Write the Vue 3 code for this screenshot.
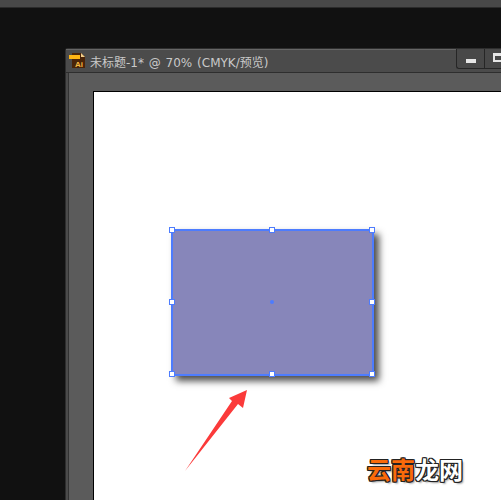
<script setup>
const handles = [
  { x: 0, y: 0 }, { x: 100, y: 0 }, { x: 200, y: 0 },
  { x: 0, y: 72 }, { x: 200, y: 72 },
  { x: 0, y: 144 }, { x: 100, y: 144 }, { x: 200, y: 144 }
]
</script>

<template>
  <div class="page">
    <div class="topbar"></div>
    <div class="window">
      <div class="titlebar">
        <svg class="ai-icon" width="16" height="16" viewBox="0 0 16 16">
          <path d="M3 0h9l4 4v11H3z" fill="#4a2408" />
          <path d="M12 0l4 4h-4z" fill="#f3cf8a" />
          <rect x="0" y="2" width="11" height="4" fill="#fdb515" />
          <text x="6" y="14" class="ai-text">Ai</text>
        </svg>
        <span class="title">未标题-1* @ 70% (CMYK/预览)</span>
        <div class="win-btns">
          <div class="win-btn"><span class="min-glyph"></span></div>
          <div class="win-btn"><span class="max-glyph"></span></div>
        </div>
      </div>
      <div class="workspace">
        <div class="artboard">
          <div class="shape">
            <span
              v-for="(h, i) in handles"
              :key="i"
              class="handle"
              :style="{ left: h.x + 'px', top: h.y + 'px' }"
            ></span>
            <span class="center-dot"></span>
          </div>
        </div>
      </div>
    </div>
    <svg class="arrow" width="70" height="90" viewBox="0 0 70 90">
      <path d="M0 83L47 13L44 10L62 2L58 20L53 16Z" fill="#fb3a3a" />
    </svg>
    <div class="watermark"><span class="orange">云南</span><span class="white">龙网</span></div>
  </div>
</template>

<style>
html, body {
  margin: 0;
  background: #111111;
}
</style>

<style scoped>
.page {
  position: relative;
  width: 501px;
  height: 500px;
  overflow: hidden;
  background: #111111;
  font-family: "DejaVu Sans", "Noto Sans CJK SC", sans-serif;
}

.topbar {
  height: 7px;
  background: #484848;
  border-bottom: 1px solid #2b2b2b;
}

.window {
  box-sizing: border-box;
  width: 480px;
  height: 460px;
  margin: 40px 0 0 65px;
  background: #4b4b4b;
  border: 1px solid #2e2e2e;
  border-right: 0;
  border-bottom: 0;
  border-top-left-radius: 3px;
  display: flex;
  flex-direction: column;
}

.titlebar {
  box-sizing: border-box;
  height: 24px;
  flex: none;
  display: flex;
  align-items: center;
  gap: 5px;
  padding-left: 3px;
  background: #4b4b4b;
  border-top: 1px solid #666666;
  border-bottom: 1px solid #2e2e2e;
  position: relative;
}

.ai-icon {
  flex: none;
}

.ai-text {
  font: bold 8px "Liberation Sans", sans-serif;
  fill: #f5b942;
}

.title {
  font-size: 12px;
  word-spacing: 1px;
  color: #c9c9c9;
  white-space: nowrap;
}

.win-btns {
  position: absolute;
  left: 390px;
  top: -1px;
  display: flex;
}

.win-btn {
  box-sizing: border-box;
  width: 28px;
  height: 20px;
  background: #484848;
  border: 1px solid #262626;
  border-top: 0;
  display: flex;
  align-items: center;
  justify-content: flex-start;
  padding-left: 8px;
}

.win-btn:first-child {
  border-right: 0;
  border-bottom-left-radius: 3px;
}

.min-glyph {
  width: 10px;
  height: 4px;
  background: #e6e6e6;
  margin: 4px 0 0 1px;
}

.max-glyph {
  box-sizing: border-box;
  flex: none;
  width: 14px;
  height: 9px;
  border: 2px solid #e6e6e6;
  border-top-width: 3px;
  margin-top: -3px;
}

.workspace {
  flex: 1;
  margin-left: 2px;
  padding: 18px 0 0 24px;
  background: #5b5b5b;
  border-left: 1px solid #333333;
}

.artboard {
  position: relative;
  height: 100%;
  background: #ffffff;
  border: 1px solid #000000;
  border-right: 0;
  border-bottom: 0;
  box-sizing: border-box;
}

.shape {
  position: absolute;
  left: 77px;
  top: 137px;
  box-sizing: border-box;
  width: 203px;
  height: 147px;
  background: #8786ba;
  border: 2px solid #4d7cfe;
  box-shadow: 5px 5px 7px rgba(0, 0, 0, 0.7);
}

.handle {
  position: absolute;
  box-sizing: border-box;
  width: 6px;
  height: 6px;
  margin: -4px 0 0 -4px;
  background: #ffffff;
  border: 1px solid #4d7cfe;
}

.center-dot {
  position: absolute;
  left: 97px;
  top: 69px;
  width: 4px;
  height: 4px;
  border-radius: 50%;
  background: #4d7cfe;
}

.arrow {
  position: absolute;
  left: 185px;
  top: 388px;
}

.watermark {
  position: absolute;
  left: 367px;
  top: 453px;
  font: bold 24px "Noto Sans CJK SC", sans-serif;
  line-height: 32px;
  white-space: nowrap;
  text-shadow: -1px -1px 0 #222, 0 -1px 0 #222, 1px -1px 0 #222, -1px 0 0 #222, 1px 0 0 #222, -1px 1px 0 #222, 0 1px 0 #222, 1px 1px 0 #222, 2px 2px 2px #999;
}

.orange {
  color: #f96a0a;
}

.white {
  color: #ffffff;
}
</style>
